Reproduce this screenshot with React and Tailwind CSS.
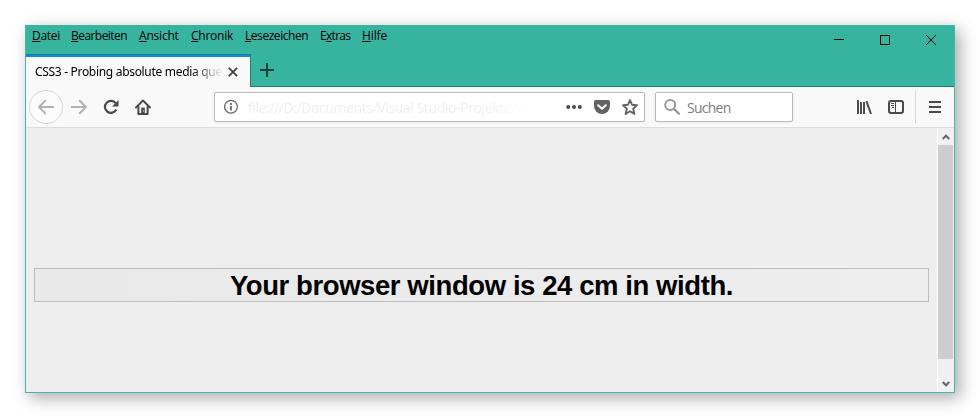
const menus = [
  { pre: '', key: 'D', post: 'atei', cls: 'w-[27px] tracking-[-0.3px]' },
  { pre: '', key: 'B', post: 'earbeiten', cls: 'w-[56px] tracking-[-0.55px]' },
  { pre: '', key: 'A', post: 'nsicht', cls: 'w-[40px] tracking-[-0.2px]' },
  { pre: '', key: 'C', post: 'hronik', cls: 'w-[42px] tracking-[-0.25px]' },
  { pre: '', key: 'L', post: 'esezeichen', cls: 'w-[63px] tracking-[-0.45px]' },
  { pre: 'E', key: 'x', post: 'tras', cls: 'w-[30px] tracking-[-0.7px]' },
  { pre: '', key: 'H', post: 'ilfe', cls: 'w-[25px] tracking-[-0.1px]' },
];

function Icon({ className = '', size = 16, children, ...rest }) {
  return (
    <svg
      className={`block shrink-0 ${className}`}
      width={size}
      height={size}
      viewBox={`0 0 ${size} ${size}`}
      fill="none"
      stroke="currentColor"
      strokeWidth="2"
      {...rest}
    >
      {children}
    </svg>
  );
}

function TitleBar() {
  return (
    <div className="flex h-[29px] justify-between bg-[#37b4a0]">
      <nav className="flex gap-3 pl-[6px] pt-[2px] font-['Open_Sans',sans-serif] text-[12px] leading-[18px] text-black">
        {menus.map((m) => (
          <span key={m.key} className={`block whitespace-nowrap ${m.cls}`}>
            {m.pre}
            <span className="underline decoration-1 underline-offset-1">{m.key}</span>
            {m.post}
          </span>
        ))}
      </nav>
      <div className="flex gap-[36px] pr-[18px] pt-[10px] text-black">
        <Icon size={10} strokeWidth="1" shapeRendering="crispEdges"><path d="M0 4.5h10" /></Icon>
        <Icon size={10} strokeWidth="1"><path d="M.5.5h9v9h-9z" /></Icon>
        <Icon size={10} strokeWidth="1"><path d="M0 0l10 10M10 0L0 10" /></Icon>
      </div>
    </div>
  );
}

function TabBar() {
  return (
    <div className="flex h-[33px] bg-[#37b4a0]">
      <div className="h-[33px] w-[225px] border-r border-t border-[#21836f] bg-[#f9f9fa]">
        <div className="h-[2px] bg-[#0a84ff]" />
        <div className="flex h-[30px] items-center pl-[9px]">
          <div className="w-[187px] overflow-hidden whitespace-nowrap text-[12px] leading-[18px] tracking-[-0.31px] text-black [mask-image:linear-gradient(to_right,black_156px,transparent_188px)]">
            CSS3 - Probing absolute media que
          </div>
          <Icon size={10} className="ml-[6px] -mt-px text-[#3c3c3e]" strokeWidth="1.7"><path d="M.8.8l8.4 8.4M9.2.8L.8 9.2" /></Icon>
        </div>
      </div>
      <div className="flex flex-1 border-b border-[#21836f] pl-[9px] pt-[9px]">
        <Icon size={14} className="text-[#153f39]"><path d="M7 0v14M0 7h14" /></Icon>
      </div>
    </div>
  );
}

function Toolbar() {
  return (
    <div className="flex h-[41px] items-center border-b border-[#dcdcdc] bg-[#f9f9fa] pl-[3px] text-[#4a4a4c]">
      <div className="flex h-[34px] w-[34px] items-center justify-center rounded-full border border-[#d7d7d8] bg-[#fcfcfc] text-[#b2b2b3]">
        <Icon strokeLinecap="round" strokeLinejoin="round"><path d="M15.2 8H1M7.2 1.8L1 8l6.2 6.2" /></Icon>
      </div>
      <Icon className="ml-[8px] text-[#b2b2b3]" strokeLinecap="round" strokeLinejoin="round"><path d="M.8 8H15M8.8 1.8L15 8l-6.2 6.2" /></Icon>
      <Icon className="ml-[16px]" strokeWidth="2.2">
        <path d="M12.7 4.2A6 6 0 1 0 13.3 10.5" />
        <path d="M15.5 1v6.5H9z" fill="currentColor" stroke="none" />
      </Icon>
      <Icon className="ml-[16px]">
        <path d="M1 8.5L8 1.5l7 7" strokeLinecap="round" strokeLinejoin="round" />
        <path d="M3.4 7v8h9.2V7" strokeLinejoin="round" />
        <path d="M6.2 8.6h3.6V15H6.2z" fill="currentColor" stroke="none" />
        <path d="M8 11.4h1v1.2H8z" fill="#f9f9fa" stroke="none" />
      </Icon>

      <div className="ml-[63px] flex h-[30px] w-[431px] items-center rounded-[2px] border border-[#b9b9ba] bg-white pl-[9px] shadow-[0_1px_3px_rgba(0,0,0,0.06)]">
        <Icon strokeWidth="1.3" className="text-[#6a6a6c]">
          <circle cx="7" cy="7.8" r="6.4" />
          <path d="M7 6.9v4.6M7 4v1.9" strokeWidth="1.8" />
        </Icon>
        <div className="ml-[8px] w-[290px] overflow-hidden whitespace-nowrap pt-px font-['Open_Sans',sans-serif] text-[14px] leading-[20px] tracking-[-0.4px] text-[#eeeeee] [mask-image:linear-gradient(to_right,black_235px,transparent_280px)]">
          file:///D:/Documents/Visual Studio-Projekte/V
        </div>
        <Icon className="ml-[28px]" fill="currentColor" stroke="none">
          <circle cx="2.2" cy="8" r="2" /><circle cx="8" cy="8" r="2" /><circle cx="13.8" cy="8" r="2" />
        </Icon>
        <Icon className="ml-[12px] text-[#626264]" stroke="none">
          <path d="M1.8 1h12.4A1.8 1.8 0 0 1 16 2.8V7A8 8 0 0 1 0 7V2.8A1.8 1.8 0 0 1 1.8 1z" fill="currentColor" />
          <path d="M4.2 6.2L8 9.8l3.8-3.6" stroke="white" strokeWidth="2" strokeLinecap="round" strokeLinejoin="round" />
        </Icon>
        <Icon className="ml-[12px] text-[#626264]" strokeWidth="1.9" strokeLinejoin="round">
          <path d="M8 1.2l2 4.5 4.9.5-3.7 3.5 1.2 5.2L8 12.3l-4.4 2.6 1.2-5.2L1.1 6.2 6 5.7z" />
        </Icon>
      </div>

      <div className="ml-[10px] flex h-[30px] w-[138px] items-center rounded-[2px] border border-[#b9b9ba] bg-white pl-[8px] shadow-[0_1px_3px_rgba(0,0,0,0.06)]">
        <Icon className="text-[#969697]"><circle cx="6.2" cy="6" r="5" /><path d="M9.8 9.6l5.7 5.7" strokeWidth="2.3" /></Icon>
        <span className="ml-[7px] pt-px font-['Open_Sans',sans-serif] text-[14px] leading-[20px] tracking-[-0.75px] text-[#7e7e80]">Suchen</span>
      </div>

      <Icon className="ml-[63px]">
        <path d="M2 1v14M5 3v12M8 3v12M10.4 2.2L15 15" />
      </Icon>
      <Icon className="ml-[16px]">
        <rect x="1" y="2" width="14" height="12" rx="2" />
        <path d="M7.5 2v12" strokeWidth="1" />
        <path d="M3 4.5h3M3 6.5h3M4 8.5h2" strokeWidth="1" />
      </Icon>
      <div className="ml-[11px] h-[34px] w-px bg-[#dcdcdd]" />
      <Icon size={12} className="ml-[13px]"><path d="M0 1h12M0 6h12M0 11h12" /></Icon>
    </div>
  );
}

function Page() {
  return (
    <div className="flex h-[264px] bg-[#eeeeee]">
      <main className="flex-1 pl-[8px] pr-[8px] pt-[140px]">
        <h1 className="h-[34px] border border-[#bdbdbd] bg-linear-to-r from-[#e9e9e9] to-[#eeeeee] text-center font-['Liberation_Sans',Arial,sans-serif] text-[27.5px] font-bold leading-[33px] tracking-[-0.42px] text-black">
          Your browser window is 24 cm in width.
        </h1>
      </main>
      <div className="flex w-[17px] flex-col items-center border-l border-white bg-[#f0f0f0] pr-px text-[#606060]">
        <div className="flex h-[17px] items-center">
          <Icon size={8}><path d="M.8 6L4 2.6 7.2 6" /></Icon>
        </div>
        <div className="h-[214px] w-full bg-[#cdcdcd]" />
        <div className="flex h-[33px] items-end pb-[4px]">
          <Icon size={8}><path d="M.8 2L4 5.4 7.2 2" /></Icon>
        </div>
      </div>
    </div>
  );
}

export default function App() {
  return (
    <div className="h-[418px] w-[980px] overflow-hidden bg-white p-[25px] font-['Noto_Sans','Open_Sans',sans-serif]">
      <div className="h-[368px] w-[930px] border border-t-0 border-[#42b9a5] shadow-[5px_5px_16px_rgba(0,0,0,0.34)]">
        <TitleBar />
        <TabBar />
        <Toolbar />
        <Page />
      </div>
    </div>
  );
}
